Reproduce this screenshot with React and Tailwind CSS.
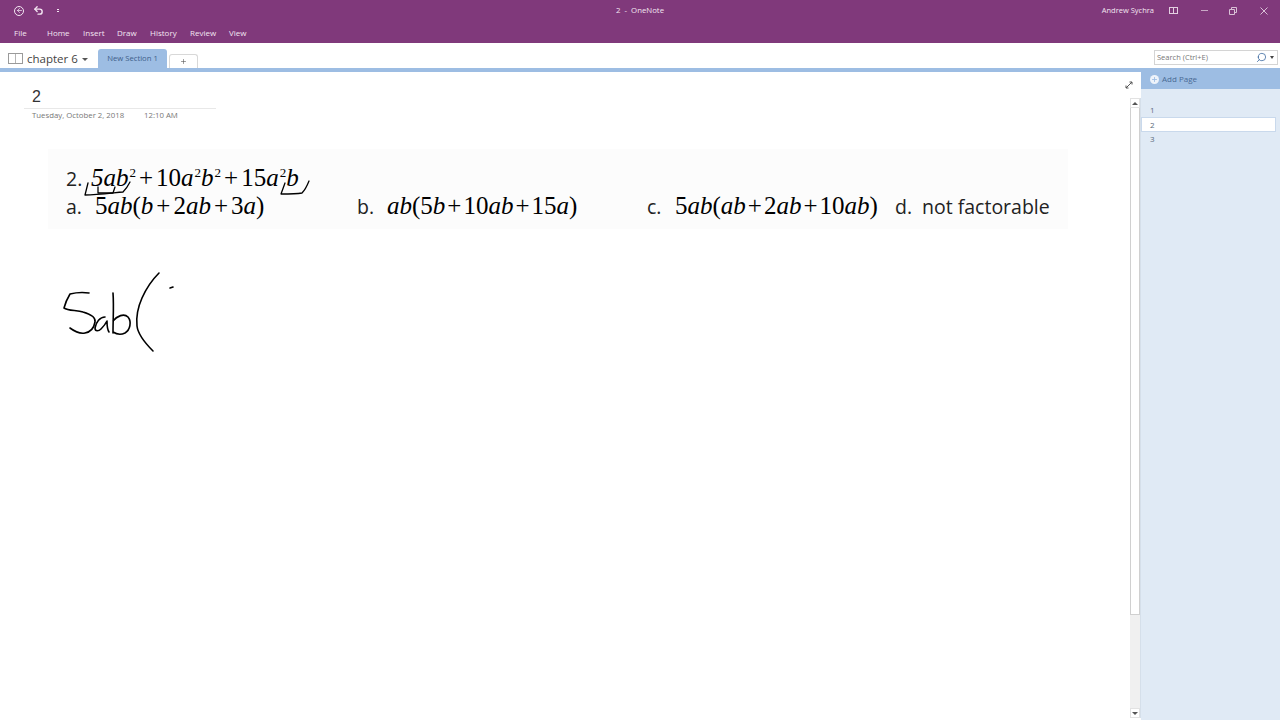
import React from "react";
import { ArrowLeft, Undo2, Search, Plus } from "lucide-react";

const tabs = [
  ["Home", "w-[36px]"],
  ["Insert", "w-[34px]"],
  ["Draw", "w-[33px]"],
  ["History", "w-[40px]"],
  ["Review", "w-[39px]"],
  ["View", "w-[20px]"],
];
const Sup = ({ children }) => <sup className="text-[13px] leading-none relative -top-[9px] ml-px align-baseline">{children}</sup>;
const I = ({ children }) => <i className="italic">{children}</i>;
const P = () => <span className="mx-[2px]">+</span>;
const W = () => <span className="mx-[3px]">+</span>;
const mathClass = "font-['Liberation_Serif',serif] text-[25px] leading-none text-black whitespace-nowrap";
const labelClass = "font-['Open_Sans',sans-serif] text-[19.5px] leading-none text-[#222] whitespace-nowrap";

function Ink() {
  return (
    <svg className="absolute left-0 top-0 pointer-events-none" width="400" height="300" viewBox="0 72 400 300" fill="none" stroke="#000" strokeLinecap="round" strokeLinejoin="round">
      <g strokeWidth="1.6">
        <path d="M89 293C82 292 74 293 70 294C67 299 65 304 64 308C68 311 77 310 83 312C90 314 96 317 95 322C94 328 90 332 85 333C80 334 74 331 70 328" />
        <path d="M105 317C100 317 96 322 95 328C95 332 99 331 101 329C104 326 106 323 107 321C107 325 107 329 109 332" />
        <path d="M113 293C114 306 113 320 113 333M113 321C117 316 124 313 128 317C132 322 130 330 125 333C121 335 116 334 113 332" />
        <path d="M159 273C152 280 146 289 142 298C138 307 136 317 137 326C138 335 146 344 153 351" />
        <path d="M170 288L173 287" />
      </g>
      <g strokeWidth="1.3">
        <path d="M88 183L85 195C97 195 112 193 123 192C126 189 128 186 130 182" />
        <path d="M98 187L98 193L113 193L115 187" />
        <path d="M285 183L281 194C288 194 296 194 302 193C305 190 307 186 309 181" />
      </g>
    </svg>
  );
}

export default function App() {
  return (
    <div className="w-[1280px] h-[720px] overflow-hidden flex flex-col bg-white font-['Open_Sans',sans-serif] relative">
      {/* Title bar */}
      <header className="h-[43px] bg-[#80397b] text-[#f3e6f2] flex flex-col shrink-0">
        <div className="h-[21px] flex items-center relative">
          <div className="flex items-center pl-[14px] gap-[9px]">
            <span className="w-[10px] h-[10px] rounded-full border border-[#f3e6f2] flex items-center justify-center">
              <ArrowLeft size={7} strokeWidth={2.5} />
            </span>
            <Undo2 size={11} strokeWidth={3} />
            <span className="ml-[4px] flex flex-col gap-[1px]">
              <span className="w-[2px] h-[1px] bg-[#f3e6f2]" />
              <span className="w-[2px] h-[1px] bg-[#f3e6f2]" />
            </span>
          </div>
          <div className="absolute left-[616px] top-0 h-[21px] flex items-center text-[7.8px] whitespace-pre">2  -  OneNote</div>
          <div className="ml-auto flex items-center">
            <span className="text-[7.5px]">Andrew Sychra</span>
            <span className="ml-[15px] w-[9px] h-[7px] border border-[#e3cfe1] flex justify-center"><span className="w-[1px] h-full bg-[#e3cfe1]" /></span>
            <span className="ml-[23px] w-[7px] h-px bg-[#c9a9c6]" />
            <svg className="ml-[21px] text-[#d9c1d6]" width="8" height="8" viewBox="0 0 8 8" fill="none" stroke="currentColor" strokeWidth="1"><path d="M0.5 2.5H5.5V7.5H0.5ZM2.5 2.5V0.5H7.5V5.5H5.5" /></svg>
            <svg className="ml-[23px] mr-[12px] text-[#e3cfe1]" width="8" height="8" viewBox="0 0 8 8" fill="none" stroke="currentColor" strokeWidth="0.9"><path d="M0.5 0.5L7.5 7.5M7.5 0.5L0.5 7.5" /></svg>
          </div>
        </div>
        <nav className="h-[22px] flex items-center text-[8px] pl-[14px] pt-[1px]">
          <span className="w-[33px]">File</span>
          {tabs.map(([t, w]) => (
            <span key={t} className={w}>{t}</span>
          ))}
        </nav>
      </header>

      {/* Notebook row */}
      <div className="h-[25px] flex items-end shrink-0 relative">
        <div className="h-full flex items-center pl-[8px] pt-[6px] w-[98px] shrink-0">
          <span className="w-[15px] h-[11px] border border-[#9a9a9a] flex justify-center shrink-0"><span className="w-[1px] h-full bg-[#b5b5b5]" /></span>
          <span className="ml-[4px] text-[11.5px] text-[#444] whitespace-nowrap">chapter 6</span>
          <span className="ml-[4px] mt-[2px] w-0 h-0 border-x-[3px] border-x-transparent border-t-[3px] border-t-[#555] shrink-0" />
        </div>
        <div className="h-[19px] w-[69px] bg-[#9dbde3] rounded-t-[3px] flex items-center justify-center pt-px text-[7.7px] text-[#40608a] whitespace-nowrap">New Section 1</div>
        <div className="h-[14px] w-[29px] ml-[2px] border border-b-0 border-[#d8d8d8] rounded-t-[3px] flex items-center justify-center text-[#555]"><Plus size={7} strokeWidth={2} /></div>
        <div className="absolute left-[1154px] top-[7px] w-[124px] h-[15px] border border-[#d4d4d4] flex items-center pl-[2px]">
          <span className="text-[7.5px] text-[#777] whitespace-nowrap">Search (Ctrl+E)</span>
          <Search className="ml-auto text-[#2d5f9a] -scale-x-100" size={11} strokeWidth={1.6} />
          <span className="ml-[3px] mr-[3px] w-0 h-0 border-x-[2.5px] border-x-transparent border-t-[3px] border-t-[#444]" />
        </div>
      </div>
      <div className="h-[4px] bg-[#9dbde3] w-[1141px] shrink-0" />

      {/* Body */}
      <div className="flex-1 flex min-h-0 relative -mt-[4px]">
        <main className="w-[1130px] mt-[4px] relative pt-[15px]">
          <div className="absolute -right-[3px] top-[9px] text-[#555]">
            <svg width="8" height="8" viewBox="0 0 8 8" fill="none" stroke="currentColor" strokeWidth="1"><path d="M1 7L7 1M4.5 1H7V3.5M1 4.5V7H3.5" /></svg>
          </div>
          <div className="pl-[32px] text-[16px] leading-[20px] text-[#333] font-['Liberation_Sans',sans-serif]">2</div>
          <div className="ml-[24px] w-[192px] h-px bg-[#e8e8e8] mt-[1px]" />
          <div className="pl-[32px] flex text-[7.8px] leading-[12px] text-[#777] whitespace-nowrap">
            <span className="w-[112px]">Tuesday, October 2, 2018</span>
            <span>12:10 AM</span>
          </div>
          {/* Pasted picture */}
          <div className="ml-[48px] mt-[28px] w-[1020px] h-[80px] bg-[#fcfcfc] pl-[18px] pt-[16px]">
            <div className="flex items-baseline h-[28px]">
              <span className={labelClass + " w-[25px]"}>2.</span>
              <span className={mathClass}>
                <I>5ab</I><Sup>2</Sup><W />10<I>a</I><Sup>2</Sup><I>b</I><Sup>2</Sup><W />15<I>a</I><Sup>2</Sup><I>b</I>
              </span>
            </div>
            <div className="flex items-baseline h-[28px]">
              <span className={labelClass + " w-[29px]"}>a.</span>
              <span className={mathClass + " w-[262px]"}>5<I>ab</I>(<I>b</I><W />2<I>ab</I><W />3<I>a</I>)</span>
              <span className={labelClass + " w-[30px]"}>b.</span>
              <span className={mathClass + " w-[260px]"}><I>ab</I>(5<I>b</I><P />10<I>ab</I><P />15<I>a</I>)</span>
              <span className={labelClass + " w-[28px]"}>c.</span>
              <span className={mathClass + " w-[220px]"}>5<I>ab</I>(<I>ab</I><P />2<I>ab</I><P />10<I>ab</I>)</span>
              <span className={labelClass + " w-[27px]"}>d.</span>
              <span className={labelClass}>not factorable</span>
            </div>
          </div>
          <Ink />
        </main>

        {/* Scrollbar */}
        <div className="w-[11px] mt-[30px] mb-[2px] flex flex-col bg-[#f0f0f0] border-r border-[#d5dfea]">
          <div className="h-[10px] bg-white border border-[#e2e2e2] flex items-center justify-center shrink-0">
            <span className="w-0 h-0 border-x-[3px] border-x-transparent border-b-[3px] border-b-[#555]" />
          </div>
          <div className="h-[507px] bg-white border-x border-b border-[#d0d0d0] shrink-0" />
          <div className="flex-1" />
          <div className="h-[10px] bg-white border border-[#e2e2e2] flex items-center justify-center shrink-0">
            <span className="w-0 h-0 border-x-[3px] border-x-transparent border-t-[3px] border-t-[#555]" />
          </div>
        </div>

        {/* Page list */}
        <aside className="w-[139px] bg-[#e0eaf5] flex flex-col text-[#5a6a7c]">
          <div className="h-[21px] bg-[#9dbde3] flex items-center pl-[9px] pt-px text-[8px] text-[#4a6a94]">
            <span className="w-[9px] h-[9px] rounded-full bg-[#eef3fa] flex items-center justify-center text-[#9dbde3]"><Plus size={7} strokeWidth={3} /></span>
            <span className="ml-[3px]">Add Page</span>
          </div>
          <div className="pt-[14px] text-[8px] flex flex-col">
            <div className="h-[14px] flex items-center pl-[9px]">1</div>
            <div className="h-[15px] w-[135px] flex items-center pl-[8px] bg-white border border-[#c9d9ec]">2</div>
            <div className="h-[14px] flex items-center pl-[9px]">3</div>
          </div>
        </aside>
      </div>
    </div>
  );
}
